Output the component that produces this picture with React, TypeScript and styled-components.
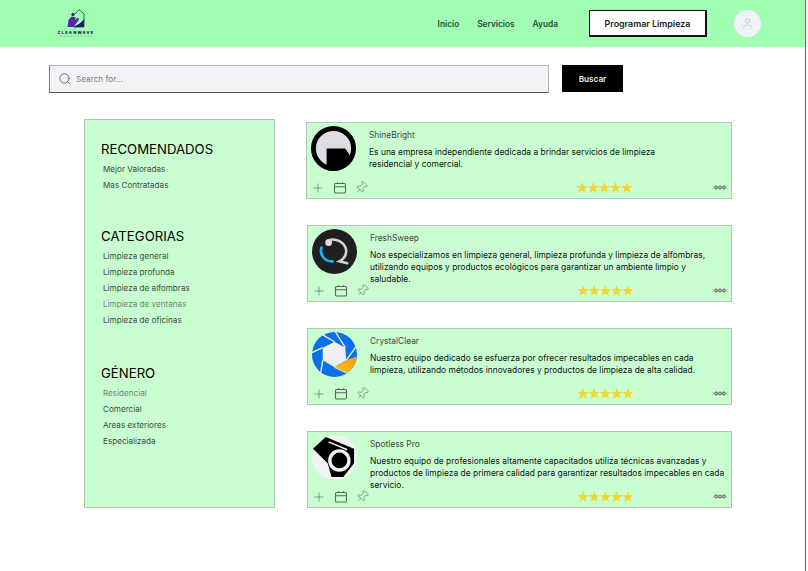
import React from "react";
import styled, { createGlobalStyle } from "styled-components";
import { Search, Plus, Pin, User } from "lucide-react";

const Global = createGlobalStyle`
  html, body { margin: 0; padding: 0; background: #fff; }
  body { font-family: Inter, "Noto Sans", sans-serif; }
`;

const Page = styled.div`
  width: 805px;
  height: 571px;
  border-right: 1px solid #6b6b6b;
  overflow: hidden;
  background: #fff;
`;

const Header = styled.header`
  height: 47px;
  background: #a0ffb2;
  display: flex;
  align-items: center;
  padding: 0 44px 0 57px;
`;

const LogoBox = styled.div`
  width: 38px;
  display: flex;
  flex-direction: column;
  align-items: center;
  margin-top: -2px;
`;

const LogoName = styled.span`
  margin-top: 2px;
  font-size: 4px;
  line-height: 5px;
  font-weight: 800;
  letter-spacing: 1.2px;
  color: #15123a;
  white-space: nowrap;
`;

const Nav = styled.nav`
  margin-left: auto;
  display: flex;
  align-items: center;
  gap: 18px;
`;

const NavLink = styled.a`
  font-size: 8.3px;
  font-weight: 600;
  color: #2d4a34;
`;

const ScheduleButton = styled.button`
  width: 118px;
  height: 27px;
  margin-left: 31px;
  background: #fff;
  border: 1px solid #111;
  border-bottom-width: 2px;
  border-right-width: 2px;
  font: 600 8.9px Inter, sans-serif;
  color: #222;
  padding: 0;
`;

const Avatar = styled.div`
  width: 27px;
  height: 27px;
  margin-left: 27px;
  border-radius: 50%;
  background: #f0f2f6;
  color: #b0b4bb;
  display: flex;
  align-items: center;
  justify-content: center;
`;

const SearchRow = styled.div`
  display: flex;
  align-items: flex-start;
  gap: 13px;
  padding: 18px 0 0 49px;
`;

const SearchBox = styled.div`
  width: 500px;
  height: 28px;
  box-sizing: border-box;
  background: #f1f3f7;
  border: 1px solid #b3b3b3;
  border-left-color: #777;
  border-bottom-color: #555;
  display: flex;
  align-items: center;
  gap: 4px;
  padding-left: 8px;
  color: #4d535e;
`;

const Placeholder = styled.span`
  font-size: 8.2px;
  color: #7a7f88;
`;

const SearchButton = styled.button`
  width: 61px;
  height: 27px;
  background: #000;
  border: 0;
  color: #e8e8e8;
  font: 600 8.2px Inter, sans-serif;
  padding: 0;
`;

const Main = styled.main`
  display: flex;
  align-items: flex-start;
  padding: 26px 0 0 84px;
  gap: 32px;
`;

const Sidebar = styled.aside`
  width: 191px;
  height: 389px;
  box-sizing: border-box;
  background: #c9ffd0;
  border: 1px solid #b4c4b6;
  padding: 21px 0 0 16px;
`;

const Section = styled.section<{ $gap: number }>`
  margin-bottom: ${(p) => p.$gap}px;
`;

const SectionTitle = styled.h2`
  margin: 0 0 3px;
  font-size: 13.2px;
  line-height: 17px;
  font-weight: 400;
  color: #000;
`;

const SideItem = styled.div<{ $muted?: boolean }>`
  margin-left: 2px;
  font-size: 8.15px;
  line-height: 16px;
  color: ${(p) => (p.$muted ? "#6f8274" : "#3c4a40")};
`;

const Cards = styled.div`
  margin-top: 3px;
  display: flex;
  flex-direction: column;
  gap: 26px;
`;

const Card = styled.article<{ $shift?: number }>`
  width: ${(p) => 425 + (p.$shift ?? 0)}px;
  height: 77px;
  box-sizing: border-box;
  margin-left: ${(p) => -(p.$shift ?? 0)}px;
  background: #c9ffd0;
  border: 1px solid #b4c4b6;
  display: flex;
  flex-direction: column;
  padding: 3px 0 0 4px;
`;

const CardTop = styled.div`
  height: 53px;
  display: flex;
  gap: 13px;
`;

const Logo = styled.svg`
  width: 45px;
  height: 45px;
  flex: none;
`;

const CardBody = styled.div<{ $limit?: number }>`
  flex: 1;
  padding: 3px 4px 0 0;
  max-width: ${(p) => (p.$limit ? `${p.$limit}px` : "none")};
`;

const CardName = styled.div`
  font-size: 8.4px;
  line-height: 12px;
  color: #3d4a40;
`;

const CardText = styled.p`
  margin: 4.5px 0 0;
  font-size: 8.45px;
  line-height: 12.4px;
  color: #111;
`;

const CardFooter = styled.div`
  display: flex;
  align-items: center;
  height: 17px;
  padding-right: 5px;
  color: #5a665d;
`;

const ActionIcons = styled.div`
  display: flex;
  align-items: center;
  gap: 8px;
`;

const CalendarIcon = styled.svg`
  width: 14px;
  height: 14px;
  fill: none;
  stroke: currentColor;
  stroke-width: 1.1;
`;

const TiltedPin = styled(Pin)`
  transform: rotate(42deg);
`;

const Stars = styled.svg`
  width: 57px;
  height: 12px;
  margin-left: 208px;
`;

const Dots = styled.svg`
  width: 12px;
  height: 5px;
  margin-left: auto;
`;

const LogoMark = () => (
  <svg width="20" height="19" viewBox="0 0 20 19">
    <path d="M9 5 L13 0.5 L18 5 V18 H8" fill="none" stroke="#2b2a4a" strokeWidth="0.8" />
    <path d="M7 18 C12 16 16 13 18 10 V18 Z" fill="#2c1a66" />
    <path d="M1.500 18 L2.500 11 L5.500 7.500 L10 8.500 L8.500 11.500 L12 8.500 L13 10.500 L7.500 18 Z" fill="#5b22a6" />
    <circle cx="7" cy="5.500" r="1.7" fill="#4a1d91" />
  </svg>
);

const LogoTagline = () => (
  <svg width="34" height="2" viewBox="0 0 34 2">
    <path d="M1 1 H33" stroke="#3f6a58" strokeWidth="0.7" strokeDasharray="2 1.4" opacity="0.55" />
  </svg>
);

const ShineLogo = () => (
  <Logo viewBox="0 0 46 46">
    <circle cx="23" cy="23" r="20.5" fill="#dcdde3" stroke="#000" strokeWidth="5" />
    <path d="M16 23 H35 L41 32 L34 42 L23 45 L16 43 Z" fill="#000" />
  </Logo>
);

const FreshLogo = () => (
  <Logo viewBox="0 0 46 46">
    <circle cx="23" cy="23" r="23" fill="#1f1f21" />
    <path d="M16 12 C24 8 34 14 35 22 C35 27 32 31 28 33 L36 35" fill="none" stroke="#d2d2d2" strokeWidth="2.6" strokeLinecap="round" />
    <circle cx="17" cy="14" r="3.4" fill="#dedede" />
    <path d="M10 18 C7 26 13 34 22 33" fill="none" stroke="#18b4e8" strokeWidth="2.8" />
  </Logo>
);

const CrystalLogo = () => (
  <Logo viewBox="0 0 46 46">
    <defs>
      <linearGradient id="orangeBlade" x1="0" y1="1" x2="1" y2="0">
        <stop offset="0" stopColor="#f7c514" />
        <stop offset="1" stopColor="#f59a0c" />
      </linearGradient>
    </defs>
    <circle cx="23" cy="23" r="23" fill="#0d6fe6" />
    <polygon points="23,10 34,16 35,29 23,36 11,29 11,16" fill="#eceef0" />
    <path d="M24 0 L34 16 M45 15 L35 29 M36 42 L23 36 M9 41 L11 29 M0 21 L11 16 M11 3 L23 10" stroke="#e6f2ff" strokeWidth="1.4" />
    <path d="M23 36 L35 29 L45.500 25 A23 23 0 0 1 36 42 Z" fill="url(#orangeBlade)" />
  </Logo>
);

const SpotlessLogo = () => (
  <Logo viewBox="0 0 46 46">
    <circle cx="23" cy="23" r="23" fill="#f2f2f2" />
    <path d="M14 2 L43 14 L43 29 L32 43 L20 43 L16 29 L1 14 Z" fill="#000" />
    <path d="M17 7 L36 15" stroke="#f2f2f2" strokeWidth="1.6" />
    <circle cx="28" cy="26" r="11.500" fill="#f2f2f2" />
    <circle cx="28" cy="26" r="8" fill="#000" />
  </Logo>
);

const starPoints = (cx: number) => {
  const pts: string[] = [];
  for (let i = 0; i < 10; i++) {
    const r = i % 2 === 0 ? 6 : 2.6;
    const a = (Math.PI / 5) * i - Math.PI / 2;
    pts.push(`${(cx + r * Math.cos(a)).toFixed(2)},${(6 + r * Math.sin(a)).toFixed(2)}`);
  }
  return pts.join(" ");
};

const cards = [
  {
    name: "ShineBright",
    text: "Es una empresa independiente dedicada a brindar servicios de limpieza residencial y comercial.",
    logo: <ShineLogo />,
    shift: 1,
    limit: 300,
  },
  {
    name: "FreshSweep",
    text: "Nos especializamos en limpieza general, limpieza profunda y limpieza de alfombras, utilizando equipos y productos ecológicos para garantizar un ambiente limpio y saludable.",
    logo: <FreshLogo />,
  },
  {
    name: "CrystalClear",
    text: "Nuestro equipo dedicado se esfuerza por ofrecer resultados impecables en cada limpieza, utilizando métodos innovadores y productos de limpieza de alta calidad.",
    logo: <CrystalLogo />,
  },
  {
    name: "Spotless Pro",
    text: "Nuestro equipo de profesionales altamente capacitados utiliza técnicas avanzadas y productos de limpieza de primera calidad para garantizar resultados impecables en cada servicio.",
    logo: <SpotlessLogo />,
  },
];

const sections = [
  { title: "RECOMENDADOS", gap: 35, items: [["Mejor Valoradas"], ["Mas Contratadas"]] },
  {
    title: "CATEGORIAS",
    gap: 37,
    items: [["Limpieza general"], ["Limpieza profunda"], ["Limpieza de alfombras"], ["Limpieza de ventanas", "m"], ["Limpieza de oficinas"]],
  },
  {
    title: "GÉNERO",
    gap: 0,
    items: [["Residencial", "m"], ["Comercial"], ["Areas exteriores"], ["Especializada"]],
  },
];

export default function App() {
  return (
    <Page>
      <Global />
      <Header>
        <LogoBox>
          <LogoMark />
          <LogoName>CLEANWAVE</LogoName>
          <LogoTagline />
        </LogoBox>
        <Nav>
          <NavLink>Inicio</NavLink>
          <NavLink>Servicios</NavLink>
          <NavLink>Ayuda</NavLink>
        </Nav>
        <ScheduleButton>Programar Limpieza</ScheduleButton>
        <Avatar>
          <User size={13} strokeWidth={1} />
        </Avatar>
      </Header>
      <SearchRow>
        <SearchBox>
          <Search size={14} strokeWidth={1.4} />
          <Placeholder>Search for...</Placeholder>
        </SearchBox>
        <SearchButton>Buscar</SearchButton>
      </SearchRow>
      <Main>
        <Sidebar>
          {sections.map((s) => (
            <Section key={s.title} $gap={s.gap}>
              <SectionTitle>{s.title}</SectionTitle>
              {s.items.map(([label, muted]) => (
                <SideItem key={label} $muted={!!muted}>
                  {label}
                </SideItem>
              ))}
            </Section>
          ))}
        </Sidebar>
        <Cards>
          {cards.map((c) => (
            <Card key={c.name} $shift={c.shift}>
              <CardTop>
                {c.logo}
                <CardBody $limit={c.limit}>
                  <CardName>{c.name}</CardName>
                  <CardText>{c.text}</CardText>
                </CardBody>
              </CardTop>
              <CardFooter>
                <ActionIcons>
                  <Plus size={14} strokeWidth={1.1} />
                  <CalendarIcon viewBox="0 0 14 14">
                    <rect x="1.500" y="2.500" width="11" height="9.500" rx="1.200" />
                    <path d="M1.500 5.800 H12.500 M4.500 1.300 V3 M9.500 1.300 V3" />
                  </CalendarIcon>
                  <TiltedPin size={13} strokeWidth={1.1} />
                </ActionIcons>
                <Stars viewBox="0 0 57 12">
                  {[6, 17.2, 28.4, 39.6, 50.8].map((x) => (
                    <polygon key={x} points={starPoints(x)} fill="#f2d636" />
                  ))}
                </Stars>
                <Dots viewBox="0 0 12 5">
                  {[2, 6, 10].map((x) => (
                    <circle key={x} cx={x} cy={2.5} r={1.5} fill="#b9c6bb" stroke="#555" strokeWidth="0.9" />
                  ))}
                </Dots>
              </CardFooter>
            </Card>
          ))}
        </Cards>
      </Main>
    </Page>
  );
}
